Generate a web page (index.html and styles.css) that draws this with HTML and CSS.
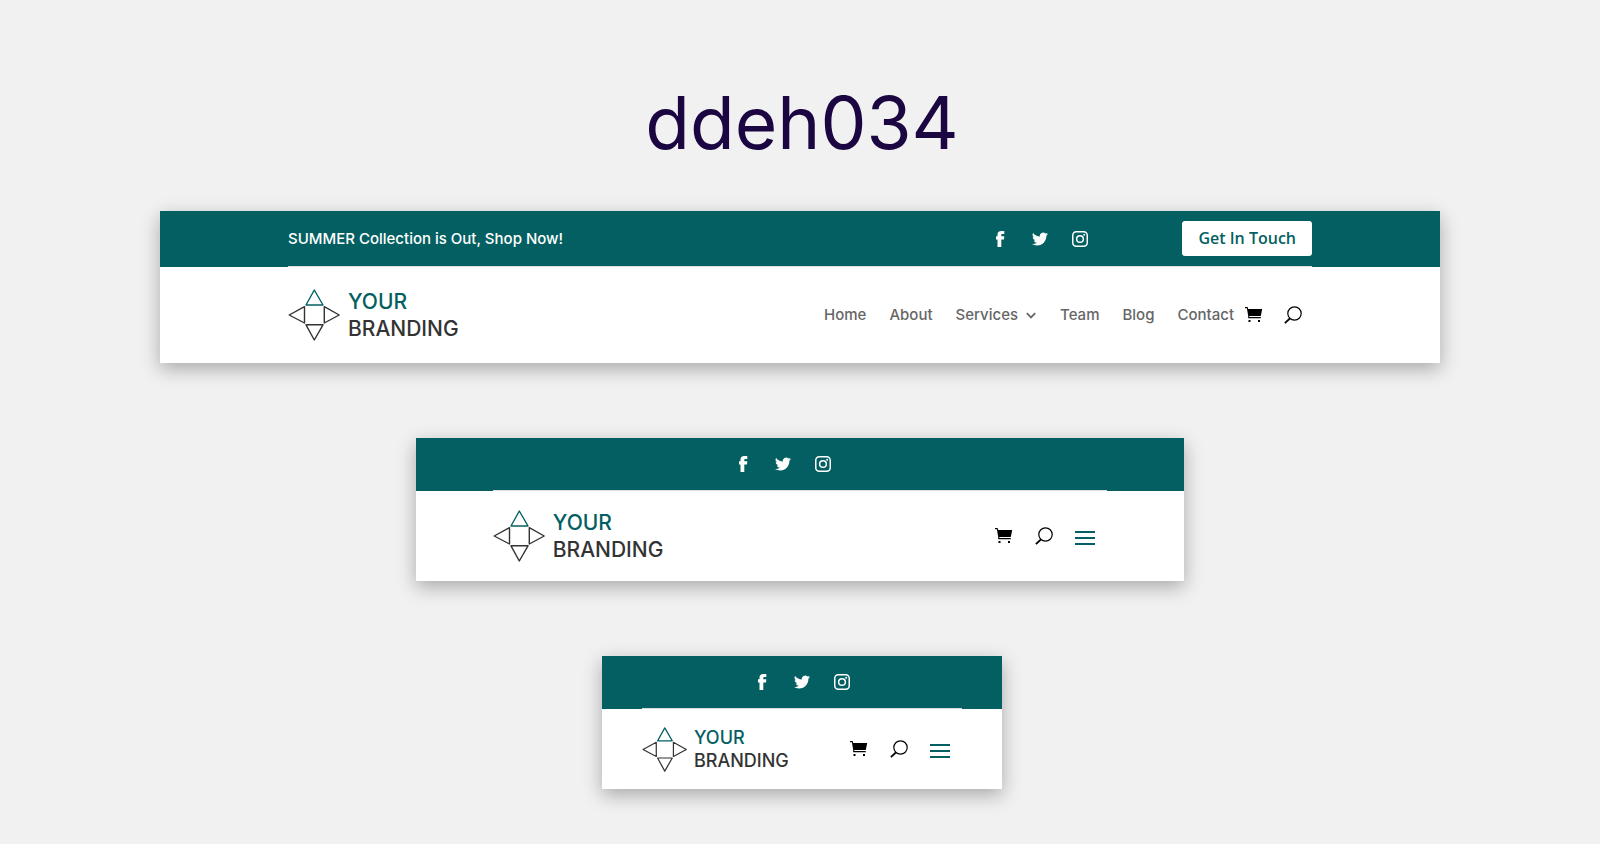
FILE: index.html
```html
<!DOCTYPE html>
<html lang="en">
<head>
<meta charset="utf-8">
<meta name="viewport" content="width=device-width, initial-scale=1">
<title>ddeh034</title>
<link rel="stylesheet" href="styles.css">
</head>
<body>
<svg class="sprite" aria-hidden="true">
  <symbol id="facebook" viewBox="0 0 16 16"><path d="M5.500 16V8.500H4V5.300h1.500V3.600C5.500 1.200 6.800 0 9.200 0H12.300v3h-1.800c-.9 0-1.200.4-1.200 1v1.300h3L12 8.500H9.300V16z"/></symbol>
  <symbol id="twitter" viewBox="0 0 16 16"><path d="M16 3.040a6.600 6.600 0 0 1-1.890.52 3.300 3.300 0 0 0 1.450-1.820 6.600 6.600 0 0 1-2.090.8 3.280 3.280 0 0 0-5.590 2.990A9.320 9.320 0 0 1 1.110 2.100a3.280 3.280 0 0 0 1.020 4.380 3.300 3.300 0 0 1-1.490-.41v.04a3.280 3.280 0 0 0 2.630 3.220 3.300 3.300 0 0 1-1.480.06 3.280 3.280 0 0 0 3.070 2.280A6.590 6.590 0 0 1 0 13.030a9.290 9.290 0 0 0 5.030 1.470c6.040 0 9.340-5 9.340-9.340l-.01-.42A6.700 6.700 0 0 0 16 3.040z"/></symbol>
  <symbol id="instagram" viewBox="0 0 16 16"><rect x=".75" y=".75" width="14.500" height="14.500" rx="3.500" fill="none" stroke="currentColor" stroke-width="1.500"/><circle cx="8" cy="8" r="3.350" fill="none" stroke="currentColor" stroke-width="1.500"/><circle cx="12.200" cy="3.800" r="1"/></symbol>
  <symbol id="cart" viewBox="0 0 18 18"><path d="M0 1h2.600l.6 2H17.200l-1.400 7H4.300v1h11.500v1.300H3.200V10L1.900 2.200H0zM3.500 14h2v2h-2zM13 14h2v2h-2z"/></symbol>
  <symbol id="search" viewBox="0 0 18 18"><g fill="none" stroke="currentColor"><circle cx="10.500" cy="7.500" r="6.700" stroke-width="1.200"/><path d="M6 12.300.9 17.200" stroke-width="1.800"/></g></symbol>
  <symbol id="mark" viewBox="0 0 52 52"><g fill="none" stroke-width="1.400" stroke-linejoin="round"><path d="M16.500 17.700v16.300L1.200 26zM36.300 17.700v16.300L51.200 26zM18 35.800h17L26.300 51z" stroke="#333"/><path d="M26.300 1 35 16H18z" stroke="#045f62"/></g></symbol>
</svg>

<h1 class="title">ddeh034</h1>

<main class="stack">
  <header class="header header-wide">
    <div class="topbar"><div class="topbar-inner">
      <p class="promo">SUMMER Collection is Out, Shop Now!</p>
      <ul class="social">
        <li><a href="#" aria-label="Facebook"><svg class="s"><use href="#facebook"/></svg></a></li>
        <li><a href="#" aria-label="Twitter"><svg class="s"><use href="#twitter"/></svg></a></li>
        <li><a href="#" aria-label="Instagram"><svg class="s"><use href="#instagram"/></svg></a></li>
      </ul>
      <a class="cta" href="#">Get In Touch</a>
    </div></div>
    <div class="main">
      <a class="logo" href="#"><svg class="mark" aria-hidden="true"><use href="#mark"/></svg><span class="brand"><span class="brand-top">YOUR</span><span>BRANDING</span></span></a>
      <div class="menu">
        <nav class="nav" aria-label="Primary">
          <a href="#">Home</a><a href="#">About</a><a class="has-sub" href="#">Services<svg class="chevron" viewBox="0 0 10 10" aria-hidden="true"><path d="M1.500 3.500 5 7l3.500-3.500"/></svg></a><a href="#">Team</a><a href="#">Blog</a><a href="#">Contact</a>
        </nav>
        <div class="tools">
          <a href="#" aria-label="Cart"><svg class="t"><use href="#cart"/></svg></a>
          <button type="button" aria-label="Search"><svg class="t"><use href="#search"/></svg></button>
        </div>
      </div>
    </div>
  </header>

  <header class="header header-tablet">
    <div class="topbar"><div class="topbar-inner">
      <ul class="social">
        <li><a href="#" aria-label="Facebook"><svg class="s"><use href="#facebook"/></svg></a></li>
        <li><a href="#" aria-label="Twitter"><svg class="s"><use href="#twitter"/></svg></a></li>
        <li><a href="#" aria-label="Instagram"><svg class="s"><use href="#instagram"/></svg></a></li>
      </ul>
    </div></div>
    <div class="main">
      <a class="logo" href="#"><svg class="mark" aria-hidden="true"><use href="#mark"/></svg><span class="brand"><span class="brand-top">YOUR</span><span>BRANDING</span></span></a>
      <div class="tools">
        <a href="#" aria-label="Cart"><svg class="t"><use href="#cart"/></svg></a>
        <button type="button" aria-label="Search"><svg class="t"><use href="#search"/></svg></button>
        <button class="burger" type="button" aria-label="Menu"><span></span><span></span><span></span></button>
      </div>
    </div>
  </header>

  <header class="header header-phone">
    <div class="topbar"><div class="topbar-inner">
      <ul class="social">
        <li><a href="#" aria-label="Facebook"><svg class="s"><use href="#facebook"/></svg></a></li>
        <li><a href="#" aria-label="Twitter"><svg class="s"><use href="#twitter"/></svg></a></li>
        <li><a href="#" aria-label="Instagram"><svg class="s"><use href="#instagram"/></svg></a></li>
      </ul>
    </div></div>
    <div class="main">
      <a class="logo" href="#"><svg class="mark" aria-hidden="true"><use href="#mark"/></svg><span class="brand"><span class="brand-top">YOUR</span><span>BRANDING</span></span></a>
      <div class="tools">
        <a href="#" aria-label="Cart"><svg class="t"><use href="#cart"/></svg></a>
        <button type="button" aria-label="Search"><svg class="t"><use href="#search"/></svg></button>
        <button class="burger" type="button" aria-label="Menu"><span></span><span></span><span></span></button>
      </div>
    </div>
  </header>
</main>
</body>
</html>
```

FILE: styles.css
```css
* { box-sizing: border-box; }

body {
  margin: 0;
  padding: 78px 0 55px;
  background: #f1f1f1;
  color: #666;
  font-family: Inter, "Liberation Sans", sans-serif;
  font-size: 15px;
  font-weight: 500;
}

a { color: inherit; text-decoration: none; }
button { padding: 0; border: 0; background: none; color: inherit; cursor: pointer; }
svg { display: block; fill: currentColor; }
.sprite { position: absolute; width: 0; height: 0; }

.title {
  margin: 0 0 43px;
  padding-left: 4px;
  color: #1b0642;
  font-size: 73px;
  font-weight: 400;
  line-height: 90px;
  text-align: center;
}

.stack { display: flex; flex-direction: column; align-items: center; gap: 75px; }

.header {
  max-width: 100%;
  background: #fff;
  box-shadow: 0 6px 18px rgba(0, 0, 0, 0.3);
}
.header-wide { width: 80%; }
.header-tablet { width: 768px; }
.header-phone { width: 400px; margin-left: 4px; }

.topbar { padding: 0 10%; background: #045f62; color: #fff; }
.topbar-inner {
  display: flex;
  align-items: center;
  justify-content: center;
  padding: 18px 0;
  border-bottom: 1px solid #d9dfdf;
}
.header-wide .topbar-inner { padding: 10px 0; }
.header-tablet .topbar-inner { padding-right: 34px; }

.promo { margin: 0 auto 0 0; line-height: 24px; }
.social { display: flex; gap: 24px; margin: 0; padding: 0; list-style: none; }
.s { width: 16px; height: 16px; }
.header-wide .social { margin-right: 94px; }

.cta {
  padding: 0 16px;
  border-radius: 3px;
  background: #fff;
  color: #045f62;
  font-family: "Open Sans", sans-serif;
  font-size: 16px;
  font-weight: 600;
  line-height: 35px;
}

.main {
  display: flex;
  align-items: center;
  justify-content: space-between;
  padding: 18px 10%;
}
.header-wide .main { padding-top: 21px; padding-bottom: 21px; }

.logo { display: flex; align-items: center; gap: 8px; color: #333; }
.mark { width: 52px; height: 52px; }
.brand { display: flex; flex-direction: column; font-size: 21px; font-weight: 500; line-height: 27px; }
.brand-top { color: #045f62; }

.header-phone .main { padding-top: 17px; padding-bottom: 17px; }
.header-phone .logo { gap: 7px; }
.header-phone .mark { width: 45px; height: 45px; }
.header-phone .brand { font-size: 18px; line-height: 23px; }

.menu { display: flex; align-items: center; gap: 11px; }
.nav { display: flex; gap: 23px; line-height: 24px; }
.has-sub { display: flex; align-items: center; gap: 7px; }
.chevron { width: 12px; height: 12px; fill: none; stroke: currentColor; stroke-width: 1.5; }

.tools { display: flex; align-items: center; gap: 22px; padding-right: 12px; color: #000; }
.menu .tools { gap: 21px; padding-right: 10px; }
.t { width: 18px; height: 18px; }

.burger { display: flex; flex-direction: column; gap: 4px; width: 20px; padding-top: 4px; }
.burger span { height: 2px; background: #045f62; }
```
